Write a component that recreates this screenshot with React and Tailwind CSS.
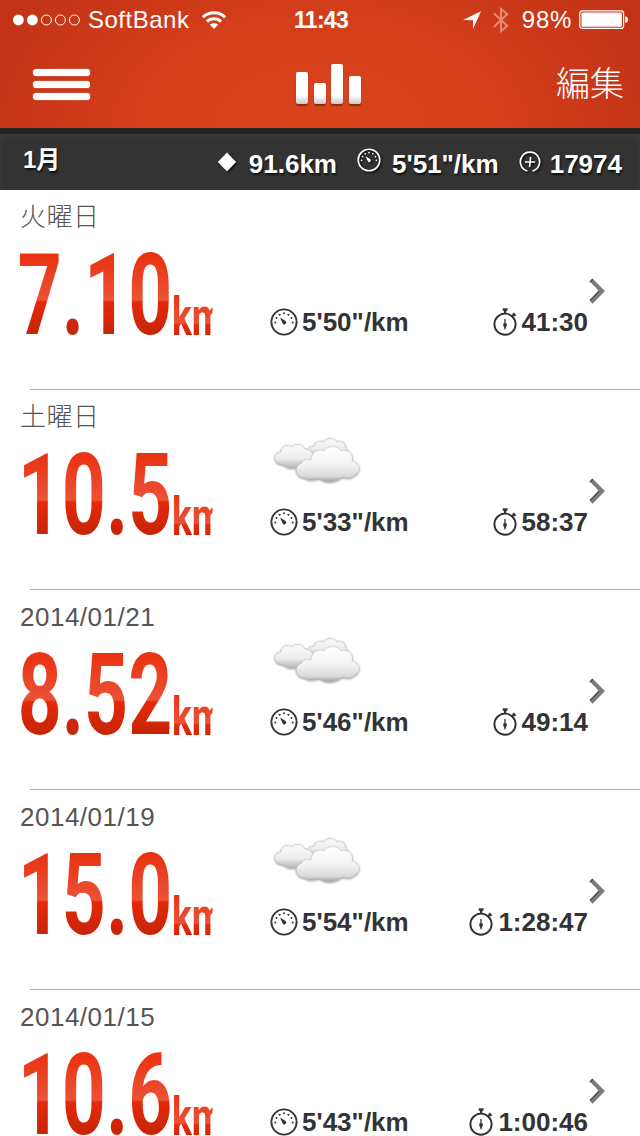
import React from "react";

const runs = [
  { date: "火曜日", distance: "7.10", pace: "5'50\"/km", time: "41:30", cloudy: false },
  { date: "土曜日", distance: "10.5", pace: "5'33\"/km", time: "58:37", cloudy: true },
  { date: "2014/01/21", distance: "8.52", pace: "5'46\"/km", time: "49:14", cloudy: true },
  { date: "2014/01/19", distance: "15.0", pace: "5'54\"/km", time: "1:28:47", cloudy: true },
  { date: "2014/01/15", distance: "10.6", pace: "5'43\"/km", time: "1:00:46", cloudy: false },
];

function Gauge({ className }) {
  return (
    <svg viewBox="0 0 28 28" className={className} fill="none" stroke="currentColor">
      <circle cx="14" cy="14" r="12.6" strokeWidth="1.9" />
      <g fill="currentColor" stroke="none">
        <circle cx="5.3" cy="14.4" r="1" />
        <circle cx="6.5" cy="10" r="1" />
        <circle cx="9.6" cy="6.7" r="1" />
        <circle cx="14" cy="5.3" r="1" />
        <circle cx="18.4" cy="6.7" r="1" />
        <circle cx="21.5" cy="10" r="1" />
        <circle cx="22.7" cy="14.4" r="1" />
        <path d="M9.9 9.6 15.6 13.1A1.8 1.8 0 0 1 13 16Z" />
      </g>
    </svg>
  );
}

function Stopwatch() {
  return (
    <svg viewBox="0 0 25 28" className="h-7 w-[25px] shrink-0" fill="none" stroke="currentColor">
      <circle cx="12" cy="16.2" r="10.6" strokeWidth="1.9" />
      <path d="M9.7 1.5h4.8M12.1 1.5v4" strokeWidth="2.3" />
      <path d="m19.2 8.2 2.2-2.1" strokeWidth="2" />
      <path d="m20 5.2 2.5 2.5" strokeWidth="2.2" />
      <path d="M12 11v10.2" strokeWidth="1.3" />
      <path d="M10.3 15.2h3.4v2.8L12 20.5 10.3 18Z" fill="currentColor" stroke="none" />
    </svg>
  );
}

function Clouds() {
  return (
    <svg viewBox="0 0 100 60" className="block h-[60px] w-[100px]">
      <defs>
        <linearGradient id="cloudBack" x1="0" y1="0" x2="0" y2="1">
          <stop offset="0" stopColor="#fbfbfb" />
          <stop offset="0.6" stopColor="#ececec" />
          <stop offset="1" stopColor="#b4b4b4" />
        </linearGradient>
        <linearGradient id="cloudFront" x1="0" y1="0" x2="0" y2="1">
          <stop offset="0" stopColor="#ffffff" />
          <stop offset="0.55" stopColor="#f1f1f1" />
          <stop offset="0.85" stopColor="#d8d8d8" />
          <stop offset="1" stopColor="#a2a2a2" />
        </linearGradient>
        <filter id="cloudShadow" x="-20%" y="-20%" width="140%" height="150%">
          <feDropShadow dx="0" dy="0.8" stdDeviation="1" floodColor="#000" floodOpacity="0.5" />
        </filter>
      </defs>
      <g filter="url(#cloudShadow)" stroke="#aaa" strokeWidth="0.4">
        <path fill="url(#cloudBack)" d="M41 26C35 22 38 16 44 16C45 12 50 10 54 12C56 8 64 7 67 12C71 10 76 13 75 17C80 21 77 26 71 26Z" />
        <path fill="url(#cloudBack)" d="M10 34C3 32 3 22 11 22C11 16 18 13 22 17C25 13 33 14 35 19C40 19 45 24 43 29C42 34 36 35 31 35C27 39 17 39 14 35Z" />
        <path fill="url(#cloudFront)" d="M35 48C25 47 23 36 32 33C34 29 38 28 41 30C41 21 49 18 54 21C58 15 68 15 71 21C78 18 84 24 82 31C89 32 92 40 86 44C82 49 76 48 72 47C66 53 54 53 49 48C46 50 38 51 35 48Z" />
      </g>
    </svg>
  );
}

function Chevron() {
  return (
    <svg viewBox="0 0 20 28" className="h-7 w-5">
      <path d="m1.6 4.6 2.9-3L17 14 4.5 26.8l-2.9-3L11 14Z" fill="#7c7c7c" />
      <path d="m2 5 2.7-2.8M2 23.5 11.2 14" fill="none" stroke="#505050" strokeWidth="1.5" />
    </svg>
  );
}

function StatusBar() {
  return (
    <div className="flex h-10 items-center">
      <div className="flex flex-1 items-center pl-[13px]">
        <svg viewBox="0 0 70 12" className="h-3 w-[70px]" fill="none" stroke="white">
          <circle cx="5.4" cy="6" r="5.4" fill="white" stroke="none" />
          <circle cx="19.4" cy="6" r="5.4" fill="white" stroke="none" />
          <circle cx="33.4" cy="6" r="5" />
          <circle cx="47.4" cy="6" r="5" />
          <circle cx="61.4" cy="6" r="5" />
        </svg>
        <span className="ml-[5px] text-2xl tracking-[0.5px]">SoftBank</span>
        <svg viewBox="0 0 26 20" className="ml-3 h-5 w-[26px]" fill="none" stroke="white" strokeWidth="3">
          <path d="M1.8 7.2A16 16 0 0 1 24.2 7.2" />
          <path d="M6 11.6A10 10 0 0 1 20 11.6" />
          <path d="m13 19-4.2-4.4a6 6 0 0 1 8.4 0Z" fill="white" stroke="none" />
        </svg>
      </div>
      <span className="text-[23px] font-bold tracking-[-0.7px]">11:43</span>
      <div className="flex flex-1 items-center justify-end pr-[11px]">
        <svg viewBox="0 0 20 20" className="mr-2.5 h-5 w-5" fill="white">
          <path d="M19 1.2 11 19V10.2L1 10.1Z" />
        </svg>
        <svg viewBox="0 0 18 28" className="mr-3 h-7 w-[18px]" fill="none" stroke="#e78b75" strokeWidth="2">
          <path d="m1.8 7.2 13.4 12.6L9 25.2V3l6.2 5.2L1.8 21" />
        </svg>
        <span className="text-2xl tracking-[0.7px]">98%</span>
        <svg viewBox="0 0 50 20" className="ml-[7px] h-5 w-[50px]">
          <rect x="0.8" y="0.8" width="43.8" height="17.6" rx="2.5" fill="none" stroke="white" strokeWidth="1.2" />
          <rect x="2.5" y="2.5" width="40.4" height="14.2" rx="1" fill="white" />
          <path d="M46.2 6.3C50 7 50 12.3 46.2 13Z" fill="white" />
        </svg>
      </div>
    </div>
  );
}

function NavBar() {
  return (
    <div className="flex h-[88px] items-center">
      <div className="flex-1 pl-[33px]">
        <div className="flex w-[57px] flex-col gap-[5px]">
          <i className="h-[7px] rounded-sm bg-white shadow-[0_0_1px_#fff]" />
          <i className="h-[7px] rounded-sm bg-white shadow-[0_0_1px_#fff]" />
          <i className="h-[7px] rounded-sm bg-white shadow-[0_0_1px_#fff]" />
        </div>
      </div>
      <div className="flex h-10 items-end gap-[5.5px]">
        <i className="h-8 w-3 rounded-[2px] bg-linear-to-b from-white from-75% to-[#c9c5c3] shadow-[0_1.5px_1px_#8f2a12]" />
        <i className="h-[21px] w-3 rounded-[2px] bg-linear-to-b from-white from-65% to-[#c9c5c3] shadow-[0_1.5px_1px_#8f2a12]" />
        <i className="h-10 w-3 rounded-[2px] bg-linear-to-b from-white from-80% to-[#c9c5c3] shadow-[0_1.5px_1px_#8f2a12]" />
        <i className="h-7 w-3 rounded-[2px] bg-linear-to-b from-white from-70% to-[#c9c5c3] shadow-[0_1.5px_1px_#8f2a12]" />
      </div>
      <div className="flex-1 pr-4 text-right text-[34px] leading-[34px] font-light">
        編集
      </div>
    </div>
  );
}

function Summary() {
  return (
    <div className="flex h-[62px] items-center border-t-[6px] border-[#242424] bg-[#333] pr-[18px] pl-[23px] text-[26px] font-bold text-white shadow-[inset_0_3px_5px_#3c3c3c] [text-shadow:1px_2px_2px_#111]">
      <span className="-mt-1 flex-1 text-2xl">1月</span>
      <svg viewBox="0 0 20 20" className="mr-3 h-5 w-5 drop-shadow-[1px_1px_1px_#000]">
        <path d="m10 .5 9.2 9.5L10 19.5.8 10Z" fill="white" />
      </svg>
      <span className="mt-1">91.6km</span>
      <Gauge className="-mt-1 mr-[11px] ml-5 size-6 drop-shadow-[1px_1px_1px_#000]" />
      <span className="mt-1">5'51"/km</span>
      <svg viewBox="0 0 22 22" className="mr-[9px] ml-5 size-[22px] drop-shadow-[1px_1px_1px_#000]" fill="none" stroke="white" strokeWidth="1.7">
        <path d="M8.4 20A9.6 9.6 0 1 1 13.6 20" />
        <path d="M6 11h10.2M11.6 6l-1 10" />
      </svg>
      <span className="mt-1">17974</span>
    </div>
  );
}

function RunRow({ run }) {
  return (
    <li className="flex h-[200px] flex-col">
      <div className="h-[52px] pt-2.5 pl-5 text-[26px] leading-[34px] font-light tracking-[0.5px] text-[#555]">{run.date}</div>
      <div className="flex h-[147px]">
        <div className="flex h-[100px] w-[230px] items-start">
          <div className="flex w-[172px] justify-end">
            <span className="origin-right scale-x-[0.68] bg-[linear-gradient(180deg,#e93312_14px,#ec5137_57px,#ec5137_58px,#e52909_60px,#c52408_94px)] bg-clip-text font-['Roboto'] text-[113px] leading-[108px] font-bold text-transparent">
              {run.distance}
            </span>
          </div>
          <span className="mt-[34px] w-[58px] origin-left scale-x-[0.7] bg-[linear-gradient(180deg,#e93312_18px,#ec5137_47px,#e52909_49px,#d02607_61px)] bg-clip-text font-['Roboto'] text-[53px] leading-[82px] font-bold text-transparent">
            km
          </span>
        </div>
        <div className="flex flex-1 flex-col pl-10">
          <div className="h-[68px] -mt-3">{run.cloudy && <Clouds />}</div>
          <div className="mt-1 flex h-[40px] items-center text-[26px] font-bold text-[#333]">
            <Gauge className="size-7 shrink-0" />
            <span className="ml-1 flex-1">{run.pace}</span>
            <Stopwatch />
            <span className="ml-1">{run.time}</span>
          </div>
        </div>
        <div className="w-[52px] pt-[35px]">
          <Chevron />
        </div>
      </div>
      <div className="ml-[30px] h-px bg-[#a9a9a9]" />
    </li>
  );
}

export default function App() {
  return (
    <div className="h-[1136px] w-[640px] overflow-hidden bg-white font-['Liberation_Sans','Noto_Sans_CJK_JP',sans-serif]">
      <header className="h-32 bg-[radial-gradient(ellipse_370px_230px_at_50%_100%,#d9441c,#d33e1b_50%,#c13217)] text-white">
        <StatusBar />
        <NavBar />
      </header>
      <Summary />
      <ul>
        {runs.map((run) => (
          <RunRow key={run.date} run={run} />
        ))}
      </ul>
    </div>
  );
}
